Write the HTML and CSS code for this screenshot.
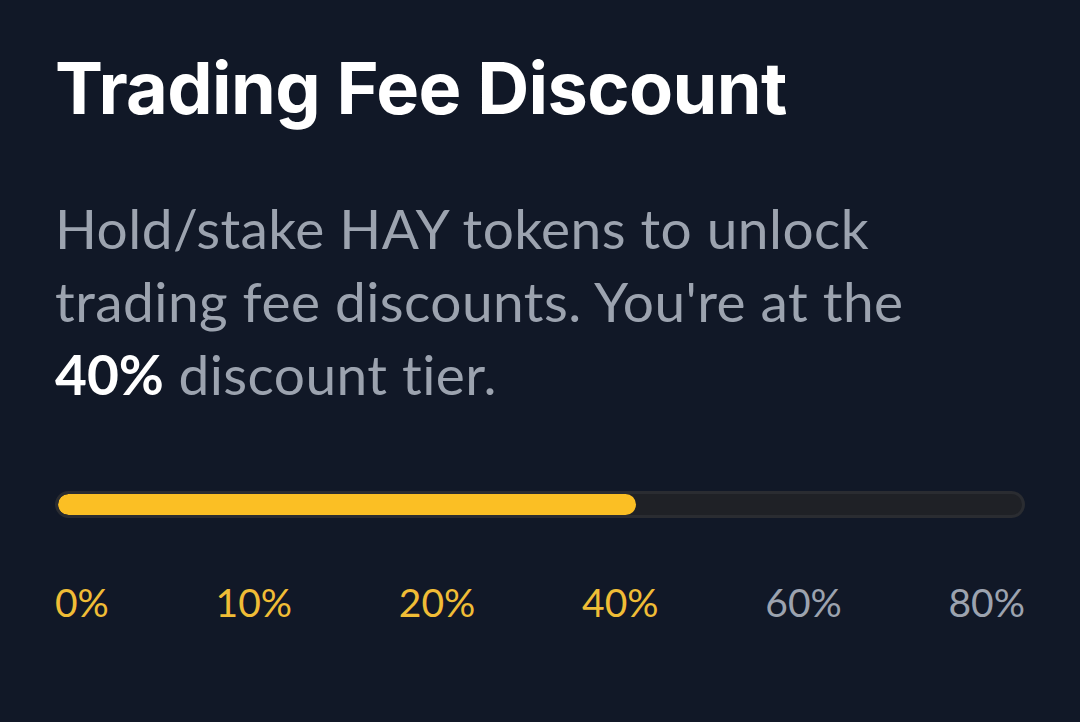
FILE: index.html
```html
<!DOCTYPE html>
<html>
<head>
<meta charset="utf-8">
<link rel="stylesheet" href="styles.css">
</head>
<body>
<main class="card">
  <h1 class="title">Trading Fee Discount</h1>
  <p class="desc">Hold/stake HAY tokens to unlock trading fee discounts. You're at the <strong class="hl">40%</strong> discount tier.</p>
  <div class="track"><div class="fill" style="width: 60%"></div></div>
  <div class="labels">
    <span class="lbl on">0%</span>
    <span class="lbl on">10%</span>
    <span class="lbl on">20%</span>
    <span class="lbl on">40%</span>
    <span class="lbl">60%</span>
    <span class="lbl">80%</span>
  </div>
</main>
</body>
</html>
```
FILE: styles.css
```css
html, body {
  margin: 0;
  padding: 0;
  background: #111827;
}
.card {
  width: 1080px;
  height: 722px;
  box-sizing: border-box;
  padding: 44px 55px 0 55px;
  display: flex;
  flex-direction: column;
}
.title {
  margin: 0;
  font-family: Inter, "Liberation Sans", sans-serif;
  font-weight: 700;
  font-size: 72px;
  line-height: 88px;
  letter-spacing: -0.6px;
  color: #ffffff;
}
.desc {
  margin: 60px 0 0 0;
  font-family: Lato, "Noto Sans", sans-serif;
  font-weight: 400;
  font-size: 55px;
  line-height: 73px;
  letter-spacing: 0.45px;
  font-variant-ligatures: none;
  color: #9ca3af;
  max-width: 900px;
}
.hl {
  font-weight: 700;
  letter-spacing: 0;
  color: #ffffff;
}
.track {
  margin-top: 80px;
  height: 27px;
  box-sizing: border-box;
  border: 3px solid #2a2c31;
  background: #1f2126;
  border-radius: 14px;
  overflow: hidden;
}
.fill {
  height: 100%;
  background: #fbbf24;
  border-radius: 11px;
}
.labels {
  margin-top: 61px;
  display: flex;
  justify-content: space-between;
}
.lbl {
  font-family: Lato, "Noto Sans", sans-serif;
  font-size: 39px;
  line-height: 46px;
  color: #9ca3af;
}
.lbl.on {
  color: #f0bd36;
}
```
